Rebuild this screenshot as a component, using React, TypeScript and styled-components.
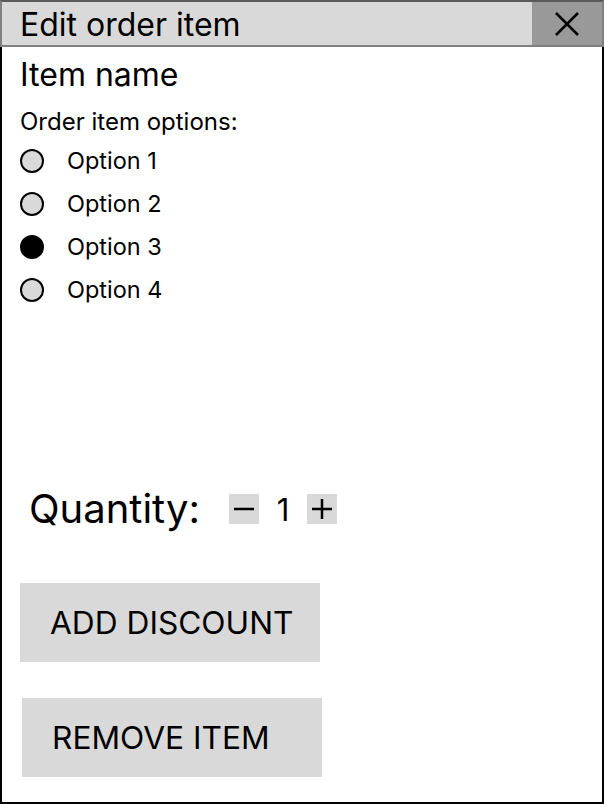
import React, { useState } from "react";
import styled, { createGlobalStyle } from "styled-components";

const Global = createGlobalStyle`
  html, body { margin: 0; padding: 0; background: #fff; }
  body { font-family: Inter, "Noto Sans", sans-serif; color: #000; }
`;

const Frame = styled.div`
  box-sizing: border-box;
  width: 604px;
  height: 804px;
  border: 2px solid #000;
  border-top: none;
  display: flex;
  flex-direction: column;
`;

const TitleBar = styled.div`
  box-sizing: border-box;
  height: 47px;
  margin: 0 -2px;
  border: 2px solid #808080;
  border-top-color: #5a5a5a;
  background: #d9d9d9;
  display: flex;
  align-items: stretch;
`;

const Title = styled.div`
  flex: 1;
  font-size: 32px;
  line-height: 45px;
  padding-left: 18px;
`;

const CloseButton = styled.button`
  width: 70px;
  border: none;
  background: #999999;
  display: flex;
  align-items: center;
  justify-content: center;
  padding: 0;
  cursor: pointer;
`;

const Body = styled.div`
  display: flex;
  flex-direction: column;
  padding: 0 0 0 18px;
  flex: 1;
`;

const ItemName = styled.div`
  font-size: 32px;
  line-height: 38px;
  margin-top: 9px;
`;

const OptionsLabel = styled.div`
  font-size: 24px;
  line-height: 29px;
  margin-top: 13px;
`;

const OptionList = styled.div`
  display: flex;
  flex-direction: column;
  gap: 14px;
  margin-top: 10px;
`;

const OptionRow = styled.label`
  display: flex;
  align-items: center;
  gap: 23px;
  font-size: 23.5px;
  line-height: 29px;
  cursor: pointer;
`;

const Radio = styled.span<{ $checked: boolean }>`
  box-sizing: border-box;
  width: 24px;
  height: 24px;
  border-radius: 50%;
  border: 2px solid #000;
  background: ${(p) => (p.$checked ? "#000" : "#d9d9d9")};
  flex-shrink: 0;
`;

const QuantityRow = styled.div`
  display: flex;
  align-items: center;
  margin-top: 181px;
  padding-left: 9px;
  height: 48px;
`;

const QuantityLabel = styled.div`
  font-size: 40px;
  line-height: 48px;
  margin-right: 29px;
`;

const StepButton = styled.button`
  width: 30px;
  height: 30px;
  border: none;
  background: #d9d9d9;
  padding: 0;
  display: flex;
  align-items: center;
  justify-content: center;
`;

const QuantityValue = styled.div`
  font-size: 31px;
  width: 48px;
  text-align: center;
`;

const ActionButton = styled.button<{ $offset: number; $top: number }>`
  box-sizing: border-box;
  width: 300px;
  height: 79px;
  border: none;
  background: #d9d9d9;
  font-family: Inter, "Noto Sans", sans-serif;
  font-size: 31.7px;
  text-align: left;
  padding: 0 0 0 30px;
  margin-left: ${(p) => p.$offset}px;
  margin-top: ${(p) => p.$top}px;
  color: #000;
`;

const options = ["Option 1", "Option 2", "Option 3", "Option 4"];

export default function App() {
  const [selected, setSelected] = useState(2);
  const [qty, setQty] = useState(1);
  return (
    <>
      <Global />
      <Frame>
        <TitleBar>
          <Title>Edit order item</Title>
          <CloseButton aria-label="Close">
            <svg width="26" height="26" viewBox="0 0 26 26">
              <path d="M2 2 L24 24 M24 2 L2 24" stroke="#000" strokeWidth="2.5" />
            </svg>
          </CloseButton>
        </TitleBar>
        <Body>
          <ItemName>Item name</ItemName>
          <OptionsLabel>Order item options:</OptionsLabel>
          <OptionList>
            {options.map((o, i) => (
              <OptionRow key={o} onClick={() => setSelected(i)}>
                <Radio $checked={selected === i} />
                {o}
              </OptionRow>
            ))}
          </OptionList>
          <QuantityRow>
            <QuantityLabel>Quantity:</QuantityLabel>
            <StepButton aria-label="Decrease" onClick={() => setQty(Math.max(1, qty - 1))}>
              <svg width="22" height="22" viewBox="0 0 22 22">
                <path d="M1 11 H21" stroke="#000" strokeWidth="2.5" />
              </svg>
            </StepButton>
            <QuantityValue>{qty}</QuantityValue>
            <StepButton aria-label="Increase" onClick={() => setQty(qty + 1)}>
              <svg width="22" height="22" viewBox="0 0 22 22">
                <path d="M1 11 H21 M11 1 V21" stroke="#000" strokeWidth="2.5" />
              </svg>
            </StepButton>
          </QuantityRow>
          <ActionButton $offset={0} $top={50}>ADD DISCOUNT</ActionButton>
          <ActionButton $offset={2} $top={36}>REMOVE ITEM</ActionButton>
        </Body>
      </Frame>
    </>
  );
}
